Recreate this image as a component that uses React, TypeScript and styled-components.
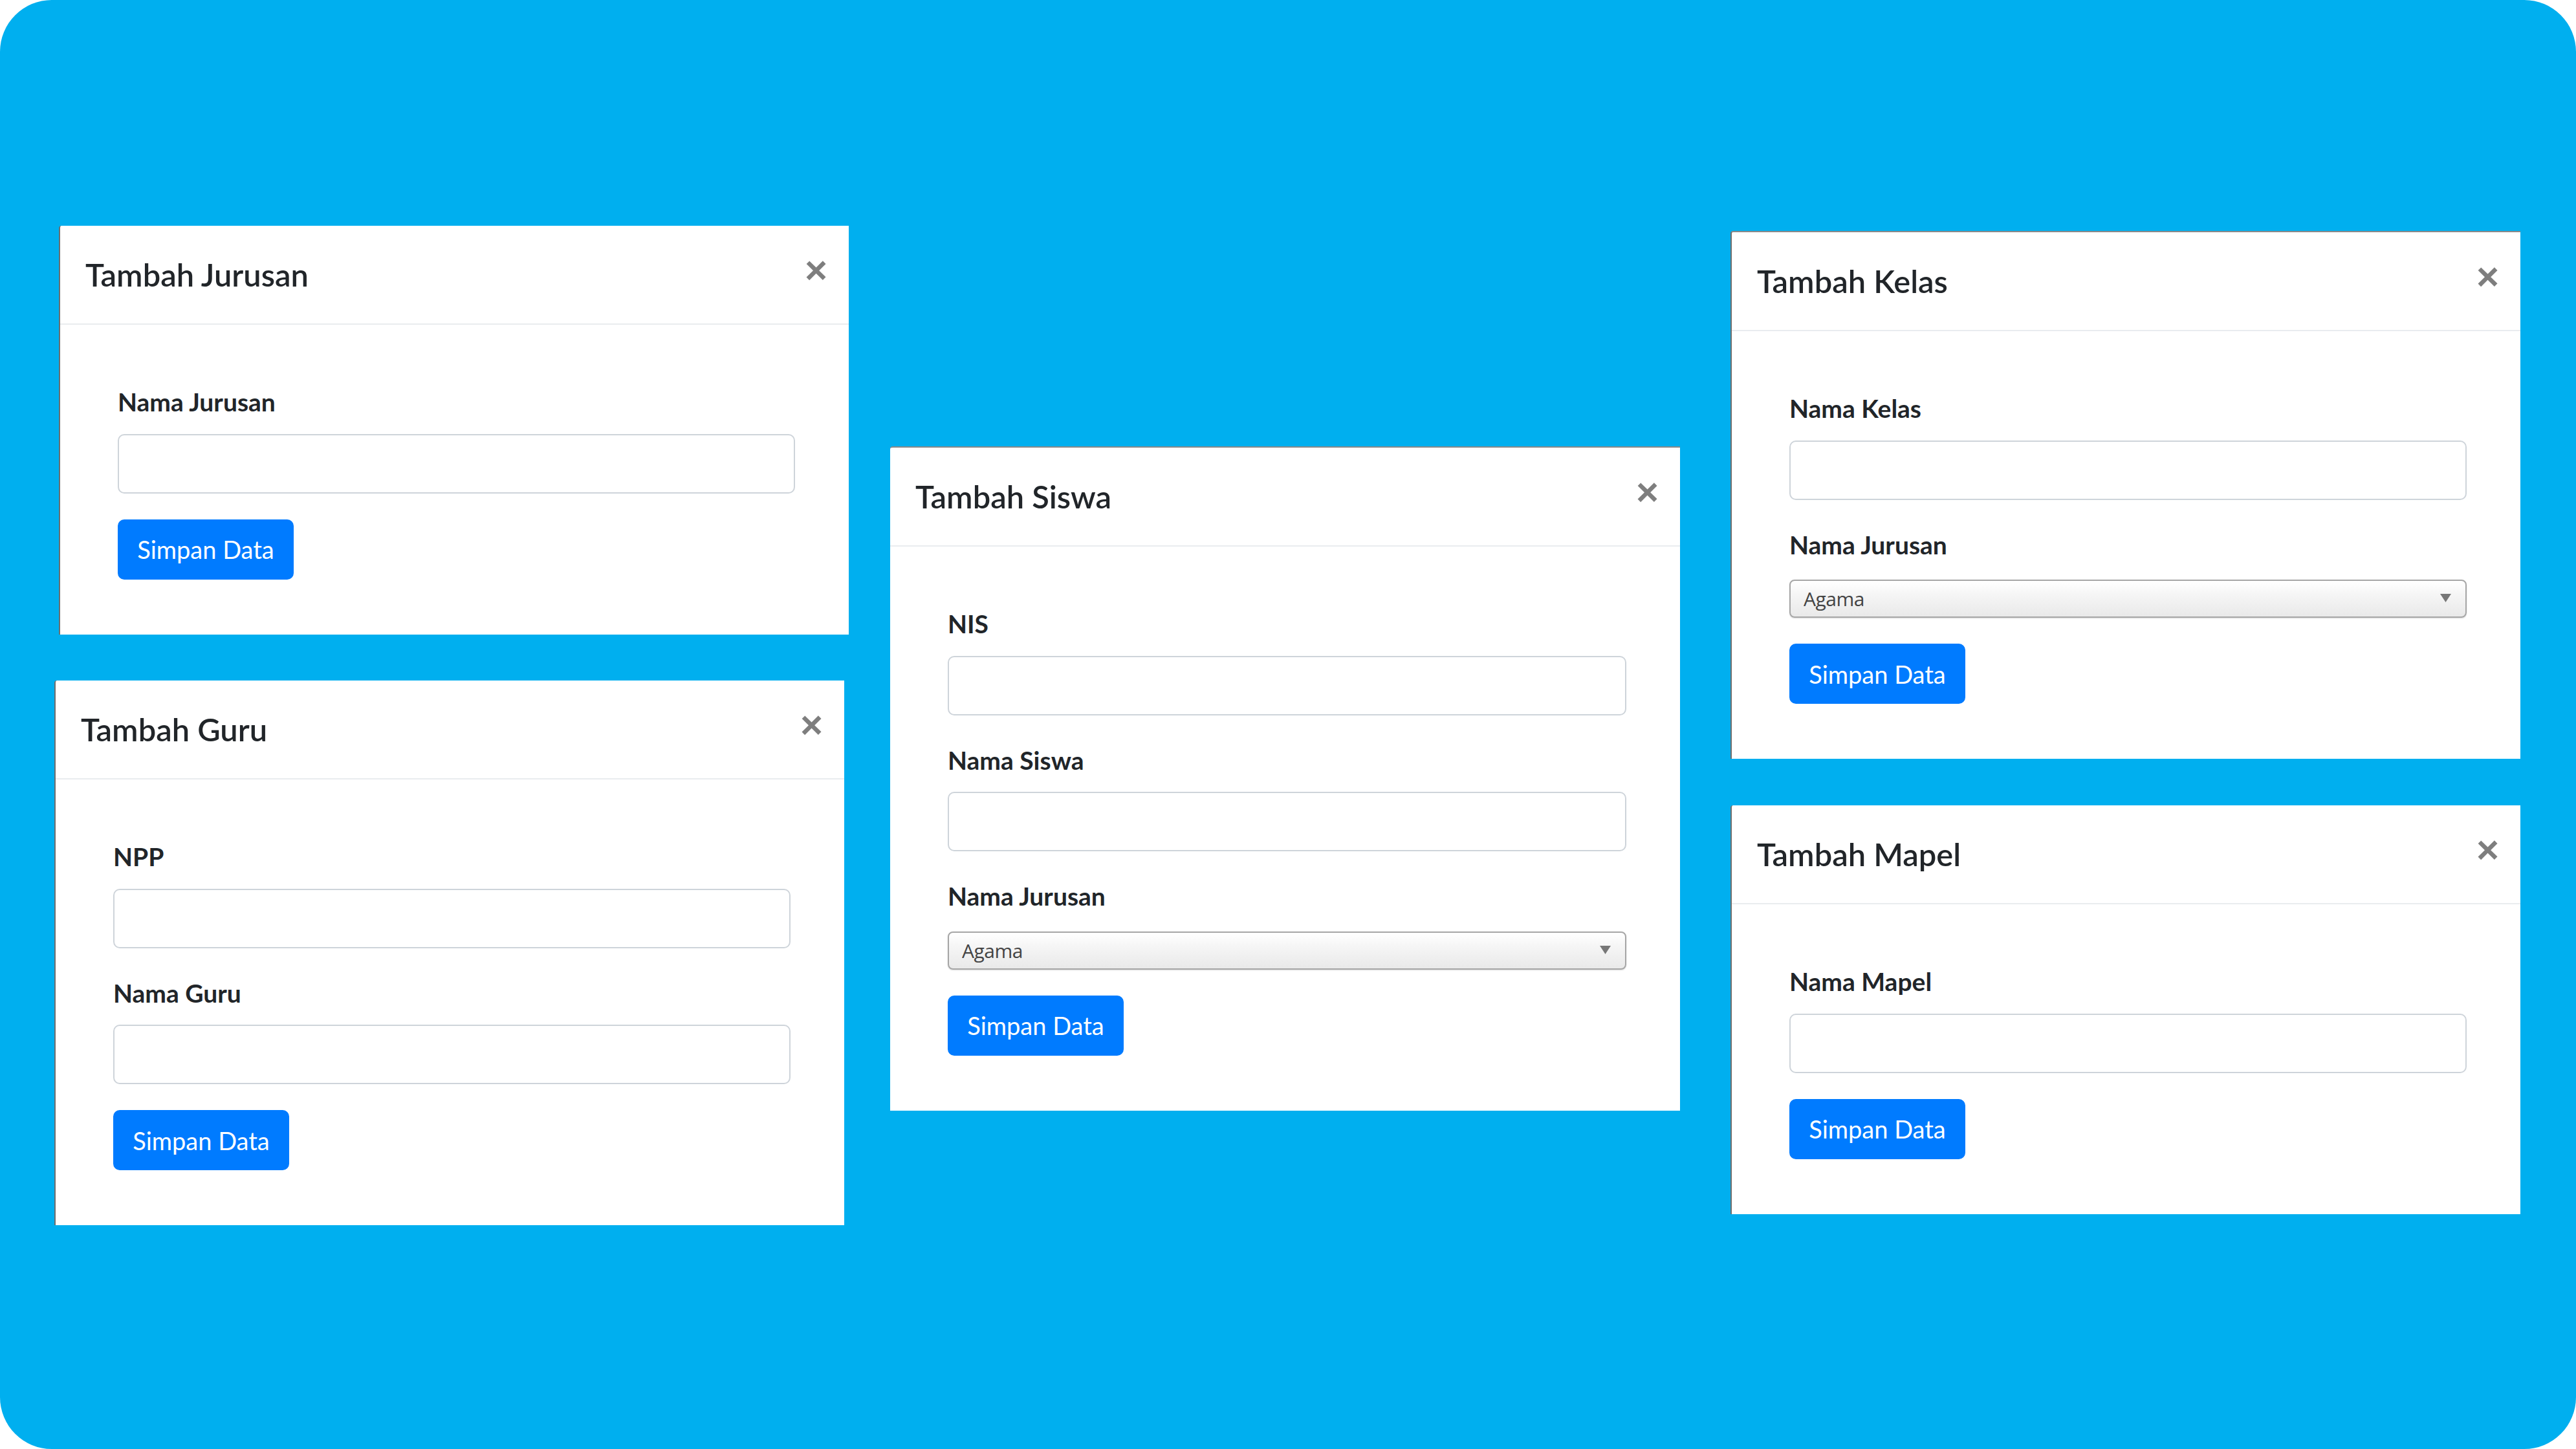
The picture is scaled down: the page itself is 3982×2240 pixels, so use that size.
import styled, { createGlobalStyle } from "styled-components";

interface Field {
    label: string,
    select?: string
}

interface ModalData {
    title: string,
    x: number,
    y: number,
    edge: "left" | "top" | "both",
    fields: Field[]
}

const modals: ModalData[] = [
    {title: "Tambah Jurusan", x: 91, y: 349, edge: "left", fields: [{label: "Nama Jurusan"}]},
    {title: "Tambah Guru", x: 84, y: 1052, edge: "left", fields: [{label: "NPP"}, {label: "Nama Guru"}]},
    {
        title: "Tambah Siswa", x: 1376, y: 690, edge: "top",
        fields: [{label: "NIS"}, {label: "Nama Siswa"}, {label: "Nama Jurusan", select: "Agama"}]
    },
    {
        title: "Tambah Kelas", x: 2675, y: 357, edge: "both",
        fields: [{label: "Nama Kelas"}, {label: "Nama Jurusan", select: "Agama"}]
    },
    {title: "Tambah Mapel", x: 2675, y: 1245, edge: "left", fields: [{label: "Nama Mapel"}]},
];

const GlobalStyle = createGlobalStyle`
  html, body {
    margin: 0;
    padding: 0;
    background: #ffffff;
  }
  body {
    font-family: Lato, "Liberation Sans", sans-serif;
    color: #212529;
  }
`;

const Stage = styled.div`
  position: relative;
  width: 3982px;
  height: 2240px;
  background: #00afef;
  border-radius: 80px;
  overflow: hidden;
`;

const ModalBox = styled.div<{ $x: number, $y: number, $edge: string }>`
  position: absolute;
  left: ${p => p.$x}px;
  top: ${p => p.$y}px;
  width: 1221px;
  box-sizing: border-box;
  background: #ffffff;
  display: flex;
  flex-direction: column;
  border-left: ${p => p.$edge !== "top" ? "2px solid #6e6e6e" : "none"};
  border-top: ${p => p.$edge !== "left" ? "2px solid #8a8a8a" : "none"};
  border-top-left-radius: 4px;
`;

const Header = styled.div`
  display: flex;
  align-items: flex-start;
  padding: 39px;
  border-bottom: 2px solid #e9ecef;
`;

const Title = styled.h5`
  margin: 0;
  font-size: 48.8px;
  line-height: 73px;
  font-weight: 600;
  color: #212529;
`;

const Close = styled.button`
  margin: -39px -39px -39px auto;
  padding: 39px 33px 39px 40px;
  background: transparent;
  border: 0;
  font-family: "Liberation Sans", sans-serif;
  font-size: 60px;
  font-weight: 700;
  line-height: 1;
  color: #000;
  opacity: .5;
`;

const Body = styled.div`
  padding: 90px 83px 85px 89px;
  display: flex;
  flex-direction: column;
`;

const Group = styled.div`
  display: flex;
  flex-direction: column;
  margin-bottom: 40px;
`;

const Label = styled.label`
  font-size: 39px;
  line-height: 58.5px;
  font-weight: 700;
  margin-bottom: 20px;
  color: #212529;
`;

const Input = styled.input`
  height: 92px;
  box-sizing: border-box;
  border: 2px solid #ced4da;
  border-radius: 10px;
  background: #fff;
  outline: none;
  font-size: 39px;
  padding: 0 29px;
`;

const SelectWrap = styled.div`
  position: relative;
  margin-top: 5px;
`;

const Select = styled.select`
  width: 100%;
  height: 59px;
  box-sizing: border-box;
  appearance: none;
  border: 2px solid #a6a6a6;
  border-radius: 8px;
  background: linear-gradient(#ffffff 0%, #f4f4f4 45%, #e9e9e9 100%);
  box-shadow: 0 1px 2px rgba(0, 0, 0, .15);
  font-family: "Open Sans", "Noto Sans", sans-serif;
  font-size: 30px;
  letter-spacing: -0.5px;
  color: #444;
  padding: 0 20px;
  outline: none;
`;

const Arrow = styled.svg`
  position: absolute;
  right: 24px;
  top: 22px;
  width: 17px;
  height: 13px;
  pointer-events: none;
`;

const Button = styled.button`
  align-self: flex-start;
  width: 272px;
  height: 93px;
  box-sizing: border-box;
  background: #007bff;
  border: 2px solid #007bff;
  border-radius: 10px;
  color: #fff;
  font-family: Lato, "Liberation Sans", sans-serif;
  font-size: 38px;
  font-weight: 400;
  padding: 0;
`;

const Modal = ({data}: { data: ModalData }) => (
    <ModalBox $x={data.x} $y={data.y} $edge={data.edge}>
        <Header>
            <Title>{data.title}</Title>
            <Close>×</Close>
        </Header>
        <Body>
            {data.fields.map(f => (
                <Group key={f.label}>
                    <Label>{f.label}</Label>
                    {f.select ? (
                        <SelectWrap>
                            <Select defaultValue={f.select}>
                                <option>{f.select}</option>
                            </Select>
                            <Arrow viewBox="0 0 17 13">
                                <path d="M0 0 H17 L8.5 13 Z" fill="#777"/>
                            </Arrow>
                        </SelectWrap>
                    ) : (
                        <Input type="text"/>
                    )}
                </Group>
            ))}
            <Button>Simpan Data</Button>
        </Body>
    </ModalBox>
);

export default function App() {
    return (
        <>
            <GlobalStyle/>
            <Stage>
                {modals.map(m => <Modal key={m.title} data={m}/>)}
            </Stage>
        </>
    );
}
